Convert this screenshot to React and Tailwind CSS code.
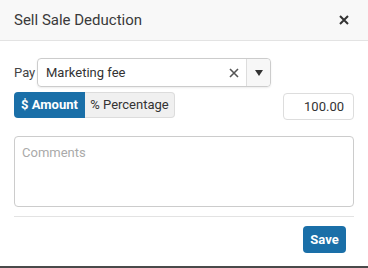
export default function App() {
  return (
    <div className="w-[368px] h-[268px] bg-[#4a4a4a] overflow-hidden" style={{ fontFamily: "Roboto, 'Liberation Sans', sans-serif" }}>
      <div className="h-[266px] bg-white flex flex-col">
        <div className="h-[41px] bg-[#f8f8f8] border-b border-[#e3e3e3] flex items-center justify-between pl-[14px] pr-[19px] shrink-0">
          <span className="text-[15px] text-[#3a3a3a]">Sell Sale Deduction</span>
          <svg width="10" height="10" viewBox="0 0 10 10"><path d="M1 1L9 9M9 1L1 9" stroke="#333" strokeWidth="2" /></svg>
        </div>
        <div className="px-[14px] pt-[17px] flex flex-col">
          <div className="flex items-center h-[29px]">
            <span className="text-[13px] text-[#444] w-[23px]">Pay</span>
            <div className="w-[234px] h-[29px] border border-[#ccc] rounded-[4px] flex items-center shadow-[0_1px_2px_rgba(0,0,0,0.08)]">
              <span className="flex-1 pl-[8px] text-[13px] text-[#333]">Marketing fee</span>
              <svg width="10" height="10" viewBox="0 0 10 10" className="mr-[7px]"><path d="M1 1L9 9M9 1L1 9" stroke="#555" strokeWidth="1.6" /></svg>
              <div className="w-px h-[27px] bg-[#ddd]" />
              <div className="w-[23px] h-[27px] bg-[#f7f7f7] rounded-r-[4px] flex items-center justify-center">
                <svg width="8" height="6" viewBox="0 0 8 6"><path d="M0 0H8L4 6Z" fill="#333" /></svg>
              </div>
            </div>
          </div>
          <div className="flex items-start mt-[5px] h-[28px]">
            <div className="flex h-[26px]">
              <div className="w-[71px] h-[26px] bg-[#1a6fa8] rounded-l-[4px] text-white font-bold text-[13px] flex items-center justify-center">$ Amount</div>
              <div className="w-[90px] h-[26px] bg-[#f0f0f0] border border-l-0 border-[#dcdcdc] rounded-r-[4px] text-[#333] text-[13px] flex items-center justify-center">% Percentage</div>
            </div>
            <div className="ml-auto mt-[1px] w-[71px] h-[27px] border border-[#ddd] rounded-[4px] flex items-center justify-end pr-[9px] text-[13px] text-[#333]">100.00</div>
          </div>
          <div className="mt-[16px] h-[71px] border border-[#ccc] rounded-[4px] px-[7px] pt-[6px] text-[13px] text-[#aaa]">Comments</div>
          <div className="mt-[9px] h-px bg-[#e3e3e3]" />
          <div className="flex justify-end mt-[9px] pr-[8px]">
            <div className="w-[43px] h-[27px] bg-[#1a6fa8] rounded-[4px] text-white font-bold text-[13px] flex items-center justify-center">Save</div>
          </div>
        </div>
      </div>
    </div>
  );
}
